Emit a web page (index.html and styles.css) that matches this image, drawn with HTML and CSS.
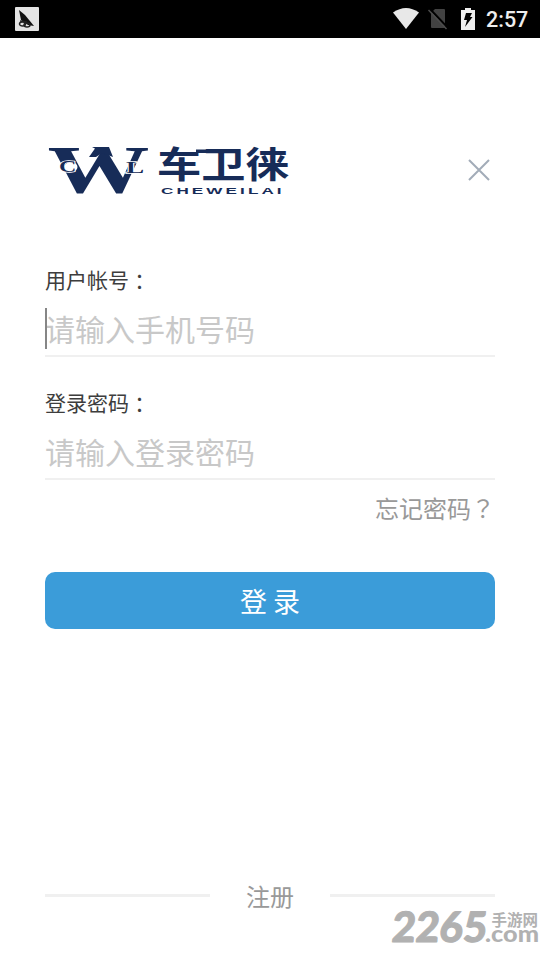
FILE: index.html
```
<!DOCTYPE html>
<html lang="zh-CN">
<head>
<meta charset="utf-8">
<title>车卫徕</title>
<link rel="stylesheet" href="styles.css">
</head>
<body>
<div class="screen">
  <header class="status">
    <svg class="app-icon" width="24" height="24" viewBox="0 0 24 24">
      <rect width="24" height="24" rx="1" fill="#e4e4e4"/>
      <path d="M4 3L10 8L19 19L13 18L6 13Z" fill="#111"/>
      <g fill="none" stroke="#222" stroke-width="1.5"><ellipse cx="7.500" cy="17" rx="3" ry="2"/><ellipse cx="12" cy="18" rx="3" ry="2"/><path d="M5 14L12 15"/></g>
    </svg>
    <div class="status-right">
      <svg width="26" height="22" viewBox="0 0 26 22"><path d="M0 4.500Q13-4.500 26 4.500L13 21Z" fill="#e8e8e8"/></svg>
      <svg class="sim" width="20" height="22" viewBox="0 0 20 22"><path d="M7 1H16Q17 1 17 2V19Q17 20 16 20H4Q3 20 3 19V5Z" fill="#424242"/><path d="M2 1L20 20" stroke="#000" stroke-width="2"/><path d="M0.500 2L18.500 21" stroke="#4c4c4c" stroke-width="1.500"/></svg>
      <svg class="battery" width="14" height="22" viewBox="0 0 14 22"><path d="M4 0H10V2H14V22H0V2H4Z" fill="#eee"/><path d="M5 5H11L9 9H11.500L4 19L6 12H3Z" fill="#000"/></svg>
      <span class="time">2:57</span>
    </div>
  </header>
  <main class="login">
    <div class="brand">
      <svg class="logo" width="250" height="60" viewBox="45 140 250 60">
        <g fill="#172c58">
          <text class="mark" transform="translate(47.500 191.500) scale(1.5 1)">W</text>
          <path d="M92 147H109L113 157L102 153L96 157H89L95 148.500Z"/>
          <ellipse cx="71" cy="167" rx="6.500" ry="5" fill="#fff"/>
          <text class="mark-letter" transform="translate(59 172) scale(1.5 1)">C</text>
          <text class="mark-letter" transform="translate(126 172.500) scale(1.7 1)">L</text>
          <text class="name" transform="translate(157 178) scale(1.23 1)">车卫徕</text>
          <path d="M196 149.500H212V153H196Z"/>
          <text class="latin" transform="translate(161 193.500) scale(1.8 1)" textLength="67">CHEWEILAI</text>
        </g>
      </svg>
      <svg class="close" width="24" height="24" viewBox="0 0 24 24"><path d="M2 2L22 22M22 2L2 22" stroke="#a2acb8" stroke-width="2"/></svg>
    </div>
    <label class="label">用户帐号<span class="mid" lang="zh-TW">：</span></label>
    <div class="field focused">请输入手机号码</div>
    <label class="label second">登录密码<span class="mid" lang="zh-TW">：</span></label>
    <div class="field">请输入登录密码</div>
    <a class="forgot">忘记密码<span class="mid" lang="zh-TW">？</span></a>
    <button class="submit">登 录</button>
  </main>
  <footer class="register"><i class="rule"></i><span>注册</span><i class="rule"></i></footer>
  <div class="watermark">
    <svg width="152" height="42" viewBox="388 905 152 42">
      <g fill="#b1b1b1">
        <text class="wm-number" transform="translate(391 942) skewX(-5)" textLength="95" lengthAdjust="spacingAndGlyphs">2265</text>
        <text class="wm-cn" x="491.500" y="926">手游网</text>
        <text class="wm-com" x="485" y="942" textLength="54" lengthAdjust="spacingAndGlyphs">.com</text>
      </g>
    </svg>
  </div>
</div>
</body>
</html>
```
FILE: styles.css
```
* { box-sizing: border-box; }
body { margin: 0; background: #fff; font-family: "Noto Sans CJK SC", sans-serif; }
svg { display: block; flex: none; overflow: visible; }
.screen { position: relative; width: 540px; height: 960px; display: flex; flex-direction: column; overflow: hidden; background: #fff; }
.status { height: 38px; background: #000; display: flex; justify-content: space-between; align-items: center; padding: 0 12px 0 15px; }
.status-right { display: flex; align-items: center; }
.sim { margin-left: 9px; }
.battery { margin-left: 13px; }
.time { margin-left: 11px; width: 42px; white-space: nowrap; color: #eee; font: 500 21.5px/38px Roboto, sans-serif; padding-top: 1px; }
.login { padding: 102px 45px 0; display: flex; flex-direction: column; }
.brand { height: 60px; display: flex; justify-content: space-between; }
.close { margin: 18px 4px 0 0; }
.mark { font: bold 68px "Liberation Serif", serif; }
.mark-letter { font: bold 16px "Liberation Serif", serif; stroke: #fff; stroke-width: 1.5px; paint-order: stroke; }
.name { font: bold 36px "Noto Sans CJK SC", sans-serif; }
.latin { font: bold 9.5px "Liberation Sans", sans-serif; }
.mid { position: relative; top: 1px; font-family: "Noto Sans CJK TC", sans-serif; }
.label { margin-top: 64px; height: 30px; font-size: 21px; line-height: 30px; color: #3d3d3d; }
.label.second { margin-top: 30px; }
.field { position: relative; height: 63px; border-bottom: 2px solid #f0f0f0; padding-top: 12px; font-size: 30px; line-height: 44px; color: #c8c8c8; }
.focused::before { content: ""; position: absolute; left: 0; top: 14px; width: 2px; height: 41px; background: #868686; }
.forgot { align-self: flex-end; margin-top: 10px; height: 36px; font-size: 24px; line-height: 36px; color: #999; }
.forgot .mid { top: 0; }
.submit { margin-top: 46px; height: 57px; border: 0; border-radius: 10px; padding: 0; background: #3b9cd9; color: #fff; font: 27px/57px "Noto Sans CJK SC", sans-serif; }
.register { margin: auto 45px 47px; height: 36px; display: flex; justify-content: space-between; align-items: center; font-size: 24px; line-height: 36px; color: #999; }
.register span { position: relative; top: 1px; }
.rule { width: 165px; height: 3px; background: #f0f0f0; }
.watermark { position: absolute; right: 0; bottom: 13px; }
.wm-number { font: 900 42px Lato, sans-serif; stroke: #b1b1b1; stroke-width: 1px; stroke-linejoin: round; }
.wm-cn { font: bold 15.5px "Noto Sans CJK SC", sans-serif; }
.wm-com { font: 900 23px Lato, sans-serif; }
```
